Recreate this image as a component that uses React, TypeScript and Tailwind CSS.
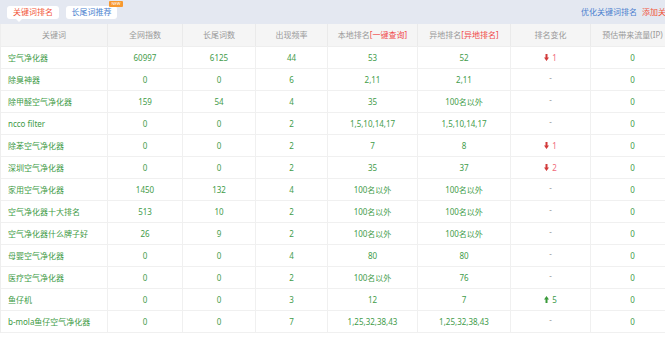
import React from "react";

type Change = { dir: "down" | "up"; n: number } | null;
type Row = [string, string, string, string, string, string, Change, string];

const rows: Row[] = [
  ["空气净化器", "60997", "6125", "44", "53", "52", { dir: "down", n: 1 }, "0"],
  ["除臭神器", "0", "0", "6", "2,11", "2,11", null, "0"],
  ["除甲醛空气净化器", "159", "54", "4", "35", "100名以外", null, "0"],
  ["ncco filter", "0", "0", "2", "1,5,10,14,17", "1,5,10,14,17", null, "0"],
  ["除苯空气净化器", "0", "0", "2", "7", "8", { dir: "down", n: 1 }, "0"],
  ["深圳空气净化器", "0", "0", "2", "35", "37", { dir: "down", n: 2 }, "0"],
  ["家用空气净化器", "1450", "132", "4", "100名以外", "100名以外", null, "0"],
  ["空气净化器十大排名", "513", "10", "2", "100名以外", "100名以外", null, "0"],
  ["空气净化器什么牌子好", "26", "9", "2", "100名以外", "100名以外", null, "0"],
  ["母婴空气净化器", "0", "0", "4", "80", "80", null, "0"],
  ["医疗空气净化器", "0", "0", "2", "100名以外", "76", null, "0"],
  ["鱼仔机", "0", "0", "3", "12", "7", { dir: "up", n: 5 }, "0"],
  ["b-mola鱼仔空气净化器", "0", "0", "7", "1,25,32,38,43", "1,25,32,38,43", null, "0"],
];

const cols = "grid grid-cols-[107px_75px_73px_72px_90px_93px_80px_83px]";

function ChangeCell({ c }: { c: Change }) {
  if (!c) return <span className="text-[#999] relative -top-[2px]">-</span>;
  const down = c.dir === "down";
  return (
    <span className="flex items-center gap-[3px]">
      <svg width="5" height="7" viewBox="0 0 5 7">
        {down ? (
          <path d="M1.5 0H3.5V3.5H5L2.5 7L0 3.5H1.5Z" fill="#d23a3a" />
        ) : (
          <path d="M1.5 7H3.5V3.5H5L2.5 0L0 3.5H1.5Z" fill="#3a9a3a" />
        )}
      </svg>
      <span className={down ? "text-[#f06a7a]" : "text-[#3a9a4a]"}>{c.n}</span>
    </span>
  );
}

export default function App() {
  return (
    <div
      className="w-[665px] h-[337px] overflow-hidden bg-white text-[8px] leading-none"
      style={{ fontFamily: '"Noto Sans", "Noto Sans CJK SC", sans-serif' }}
    >
      {/* top bar */}
      <div className="h-[24px] bg-[#e4e8f1] flex items-center justify-between pl-[7px] pr-0">
        <div className="flex items-center gap-[7px]">
          <div className="relative h-[13px] w-[52px] bg-white rounded-[3px] flex items-center justify-center text-[#f2553a]">
            关键词排名
            <span className="absolute left-[9px] -bottom-[3px] w-0 h-0 border-l-[3px] border-r-[3px] border-t-[3px] border-l-transparent border-r-transparent border-t-white" />
          </div>
          <div className="relative h-[13px] w-[51px] bg-white rounded-[3px] flex items-center justify-center text-[#4a7fcf]">
            长尾词推荐
            <span className="absolute -right-[6px] -top-[5px] h-[6px] w-[14px] bg-[#f7982f] text-white text-[4px] leading-[6px] text-center rounded-[1px]">
              NEW
            </span>
          </div>
        </div>
        <div className="flex items-center gap-[5px] whitespace-nowrap mr-[-17px]">
          <span className="text-[#4a7fcf]">优化关键词排名</span>
          <span className="text-[#f2553a]">添加关键词</span>
        </div>
      </div>

      {/* table */}
      <div className="w-[673px] border-l border-[#eee]">
        <div className={`${cols} h-[23px] bg-[#f5f5f5] text-[#999] border-b border-[#eee]`}>
          {["关键词", "全网指数", "长尾词数", "出现频率"].map((h) => (
            <div key={h} className="flex items-center justify-center border-r border-[#eaeaea]">
              {h}
            </div>
          ))}
          <div className="flex items-center justify-center border-r border-[#eaeaea]">
            本地排名<span className="text-[#f04a4a]">[一键查询]</span>
          </div>
          <div className="flex items-center justify-center border-r border-[#eaeaea]">
            异地排名<span className="text-[#f04a4a]">[异地排名]</span>
          </div>
          <div className="flex items-center justify-center border-r border-[#eaeaea]">排名变化</div>
          <div className="flex items-center justify-center">预估带来流量(IP)</div>
        </div>
        {rows.map((r, i) => (
          <div key={i} className={`${cols} h-[22px] border-b border-[#f0f0f0] text-[#3f9c4a]`}>
            <div className="flex items-center pl-[7px] border-r border-[#f0f0f0] text-[#3d9a45] whitespace-nowrap">
              {r[0]}
            </div>
            {[r[1], r[2], r[3], r[4], r[5]].map((v, j) => (
              <div key={j} className="flex items-center justify-center border-r border-[#f0f0f0] whitespace-nowrap">
                {v}
              </div>
            ))}
            <div className="flex items-center justify-center border-r border-[#f0f0f0]">
              <ChangeCell c={r[6]} />
            </div>
            <div className="flex items-center justify-center">{r[7]}</div>
          </div>
        ))}
      </div>
    </div>
  );
}
